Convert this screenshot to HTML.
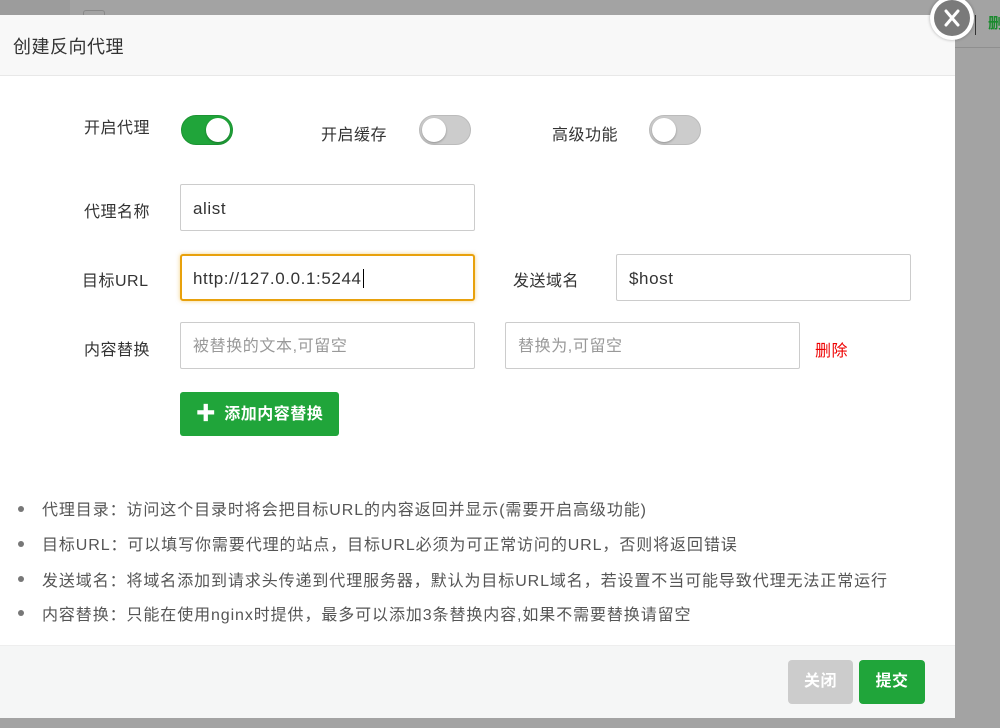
<!DOCTYPE html>
<html><head><meta charset="utf-8"><style>
*{box-sizing:border-box;margin:0;padding:0}
body{width:1000px;height:728px;overflow:hidden;background:#a3a3a3;font-family:"Liberation Sans","Noto Sans CJK SC",sans-serif;position:relative;color:#333}
.a{position:absolute}
.dlg{left:0;top:15px;width:955px;height:703px;background:#fff}
.hd{left:0;top:0;width:955px;height:61px;background:#f8f8f8;border-bottom:1px solid #e8e8e8;font-size:18px;line-height:64px;padding-left:13px;color:#333;letter-spacing:0.5px}
.lbl{font-size:16px;color:#333;letter-spacing:0.5px}
.inp{border:1px solid #ccc;border-radius:2px;height:47px;font-size:17px;line-height:47px;padding-left:12px;color:#333;background:#fff;letter-spacing:0.6px}
.ph{color:#999;font-size:16px}
.sw{width:52px;height:30px;border-radius:15px;background:#ccc;border:1px solid #bbb}
.sw i{position:absolute;top:2px;left:2px;width:24px;height:24px;border-radius:50%;background:#fff;box-shadow:0 1px 2px rgba(0,0,0,.3)}
.sw.on{background:#20a53a;border-color:#1c9433}
.sw.on i{left:24px}
.tip{font-size:16px;color:#555;left:42px;letter-spacing:0.9px;white-space:nowrap}
.dot{left:18px;width:6px;height:6px;border-radius:50%;background:#777}
.ft{left:0;top:630px;width:955px;height:73px;background:#f5f6f6;border-top:1px solid #eee}
.btn{height:44px;border-radius:4px;color:#fff;font-size:16px;font-weight:bold;text-align:center;line-height:44px;letter-spacing:0.5px}
</style></head><body>
<div class="a" style="left:0;top:0;width:70px;height:15px;background:#9c9c9c"></div>
<div class="a" style="left:83px;top:10px;width:22px;height:8px;border:1px solid #888;border-bottom:none;border-radius:3px 3px 0 0"></div>
<div class="a" style="left:955px;top:47px;width:45px;height:1px;background:#8f8f8f"></div>
<div class="a" style="left:975px;top:15px;width:1px;height:20px;background:#333"></div>
<div class="a" style="left:988px;top:12px;font-size:15px;color:#1a8a2e;font-weight:bold">删</div>
<div class="a dlg">
 <div class="a hd">创建反向代理</div>
 <div class="a lbl" style="left:84px;top:99px">开启代理</div>
 <div class="a sw on" style="left:181px;top:100px"><i></i></div>
 <div class="a lbl" style="left:321px;top:106px">开启缓存</div>
 <div class="a sw" style="left:419px;top:100px"><i></i></div>
 <div class="a lbl" style="left:552px;top:106px">高级功能</div>
 <div class="a sw" style="left:649px;top:100px"><i></i></div>

 <div class="a lbl" style="left:84px;top:183px">代理名称</div>
 <div class="a inp" style="left:180px;top:169px;width:295px">alist</div>
 <div class="a lbl" style="left:82px;top:252px">目标URL</div>
 <div class="a inp" style="left:180px;top:239px;width:295px;border:2px solid #e8a10c;border-radius:3px;box-shadow:0 0 4px rgba(232,161,12,.5);line-height:45px;padding-left:11px">http://127.0.0.1:5244<span style="border-left:1px solid #000;margin-left:1px"></span></div>
 <div class="a lbl" style="left:513px;top:252px">发送域名</div>
 <div class="a inp" style="left:616px;top:239px;width:295px">$host</div>
 <div class="a lbl" style="left:84px;top:321px">内容替换</div>
 <div class="a inp ph" style="left:180px;top:307px;width:295px">被替换的文本,可留空</div>
 <div class="a inp ph" style="left:505px;top:307px;width:295px">替换为,可留空</div>
 <div class="a" style="left:815px;top:322px;font-size:16px;color:#e00;letter-spacing:0.5px">删除</div>
 <div class="a btn" style="left:180px;top:377px;width:159px;background:#20a53a;border-radius:3px"><span style="font-size:20px;vertical-align:-1px;margin-right:8px">✚</span>添加内容替换</div>

 <div class="a dot" style="top:491px"></div><div class="a tip" style="top:481px">代理目录：访问这个目录时将会把目标URL的内容返回并显示(需要开启高级功能)</div>
 <div class="a dot" style="top:526px"></div><div class="a tip" style="top:516px">目标URL：可以填写你需要代理的站点，目标URL必须为可正常访问的URL，否则将返回错误</div>
 <div class="a dot" style="top:561px"></div><div class="a tip" style="top:552px">发送域名：将域名添加到请求头传递到代理服务器，默认为目标URL域名，若设置不当可能导致代理无法正常运行</div>
 <div class="a dot" style="top:595px"></div><div class="a tip" style="top:586px">内容替换：只能在使用nginx时提供，最多可以添加3条替换内容,如果不需要替换请留空</div>

 <div class="a ft">
  <div class="a btn" style="left:788px;top:14px;width:65px;background:#ccc">关闭</div>
  <div class="a btn" style="left:859px;top:14px;width:66px;background:#20a53a">提交</div>
 </div>
</div>
<div class="a" style="left:930px;top:-4px;width:44px;height:44px;border-radius:50%;background:#fff;box-shadow:0 0 3px rgba(0,0,0,.3)"></div>
<div class="a" style="left:934px;top:0px;width:36px;height:36px;border-radius:50%;background:#7a7a7a"></div>
<svg class="a" style="left:934px;top:0" width="36" height="36"><path d="M12 11L24 25M24 11L12 25" stroke="#fff" stroke-width="3" stroke-linecap="round"/></svg>
</body></html>
